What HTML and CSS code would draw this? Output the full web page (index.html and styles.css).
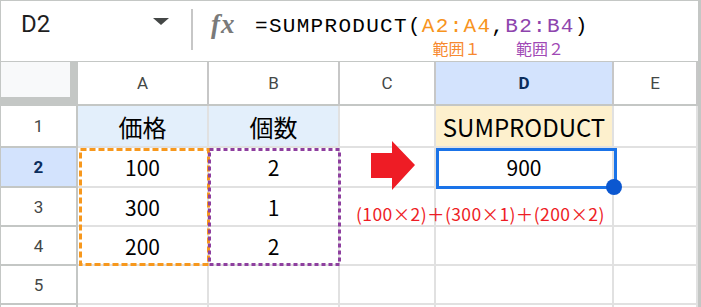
FILE: index.html
```html
<!DOCTYPE html>
<html lang="ja">
<head>
    <meta charset="UTF-8">
    <title>SUMPRODUCT</title>
    <link rel="stylesheet" href="styles.css">
</head>
<body>
    <div class="sheet">
        <div class="formula-bar">
            <div class="name-box">
                <span>D2</span>
                <span class="caret"></span>
            </div>
            <div class="divider"></div>
            <span class="fx">fx</span>
            <div class="formula">=SUMPRODUCT(<span class="range r1">A2:A4<span class="label">範囲１</span></span>,<span class="range r2">B2:B4<span class="label">範囲２</span></span>)</div>
        </div>

        <div class="grid">
            <div class="corner"></div>
            <div class="hd">A</div>
            <div class="hd">B</div>
            <div class="hd">C</div>
            <div class="hd active">D</div>
            <div class="hd">E</div>

            <div class="rh">1</div>
            <div class="c title blue">価格</div>
            <div class="c title blue">個数</div>
            <div class="c"></div>
            <div class="c title yellow">SUMPRODUCT</div>
            <div class="c"></div>

            <div class="rh active">2</div>
            <div class="c">100</div>
            <div class="c">2</div>
            <div class="c"></div>
            <div class="c">900</div>
            <div class="c"></div>

            <div class="rh">3</div>
            <div class="c">300</div>
            <div class="c">1</div>
            <div class="c"></div>
            <div class="c"></div>
            <div class="c"></div>

            <div class="rh">4</div>
            <div class="c">200</div>
            <div class="c">2</div>
            <div class="c"></div>
            <div class="c"></div>
            <div class="c"></div>

            <div class="rh">5</div>
            <div class="c"></div>
            <div class="c"></div>
            <div class="c"></div>
            <div class="c"></div>
            <div class="c"></div>

            <div class="rh"></div>
            <div class="c"></div>
            <div class="c"></div>
            <div class="c"></div>
            <div class="c"></div>
            <div class="c"></div>
        </div>

        <!-- overlays -->
        <svg class="range-box orange" width="131" height="118">
            <rect x="1.5" y="1.5" width="128" height="115" fill="none" stroke="#f7981d" stroke-width="3" stroke-dasharray="6 3"/>
        </svg>
        <svg class="range-box purple" width="133" height="118">
            <rect x="1.5" y="1.5" width="130" height="115" fill="none" stroke="#8e3f9f" stroke-width="3" stroke-dasharray="4 3"/>
        </svg>
        <div class="selection"></div>
        <div class="handle"></div>
        <svg class="arrow" width="44" height="50">
            <polygon points="0,12 21,12 21,0 44,24 21,49 21,37 0,37" fill="#ee1c25"/>
        </svg>
        <div class="note">(100×2)＋(300×1)＋(200×2)</div>
    </div>
</body>
</html>
```

FILE: styles.css
```css
body {
    margin: 0;
    background: #ffffff;
    font-family: Roboto, Arial, sans-serif;
}
.sheet {
    position: relative;
    width: 701px;
    height: 307px;
    overflow: hidden;
    box-sizing: border-box;
    border-top: 1px solid #c4c7c5;
    border-left: 1px solid #c4c7c5;
    border-right: 3px solid #c4c7c5;
    background: #ffffff;
}
.formula-bar {
    display: flex;
    align-items: flex-start;
    height: 61px;
    box-sizing: border-box;
    border-bottom: 1px solid #c4c7c5;
}
.name-box {
    width: 190px;
    box-sizing: border-box;
    display: flex;
    justify-content: space-between;
    align-items: center;
    padding: 0 22px 0 20px;
    margin-top: 9px;
    height: 28px;
    font-size: 24px;
    line-height: 28px;
    color: #1f1f1f;
}
.caret {
    width: 0;
    height: 0;
    border-left: 8px solid transparent;
    border-right: 8px solid transparent;
    border-top: 7px solid #444746;
    margin-top: -6px;
}
.divider {
    width: 2px;
    height: 41px;
    margin-top: 8px;
    background: #c7c7c7;
}
.fx {
    margin: 9px 0 0 18px;
    width: 28px;
    font-family: "Liberation Serif", serif;
    font-style: italic;
    font-weight: bold;
    font-size: 27px;
    line-height: 28px;
    color: #7a7a7a;
    letter-spacing: 1px;
}
.formula {
    margin: 14px 0 0 16px;
    font-family: "Liberation Mono", monospace;
    font-size: 21px;
    line-height: 24px;
    letter-spacing: 1.3px;
    color: #000000;
    white-space: nowrap;
}
.range {
    position: relative;
}
.range .label {
    position: absolute;
    top: 25px;
    left: 50%;
    transform: translateX(-50%);
    font-family: "Noto Sans CJK JP", sans-serif;
    font-size: 16px;
    line-height: 16px;
    letter-spacing: 0;
}
.r1 {
    color: #f7941d;
}
.r2 {
    color: #8e44ad;
}
.r1 .label {
    color: #f7892f;
}
.r2 .label {
    color: #a049b5;
}

.grid {
    display: grid;
    grid-template-columns: 77px 131px 131px 96px 178px 84px;
    grid-template-rows: 44px 42px 40px 39px 39px 39px 39px;
}
.grid > div {
    box-sizing: border-box;
    display: flex;
    align-items: center;
    justify-content: center;
}
.corner {
    background: #f8f9fa;
    border-right: 8px solid #c4c7c5;
    border-bottom: 9px solid #c4c7c5;
}
.hd {
    border-right: 2px solid #c7c7c7;
    border-bottom: 2px solid #c4c7c5;
    font-size: 17px;
    color: #444746;
}
.hd.active,
.rh.active {
    background: #d3e3fd;
    color: #0b2d5c;
    font-weight: bold;
}
.rh {
    border-right: 2px solid #c4c7c5;
    border-bottom: 2px solid #c4c7c5;
    font-size: 17px;
    color: #444746;
}
.c {
    border-right: 2px solid #e1e1e1;
    border-bottom: 2px solid #e1e1e1;
    font-family: "Noto Sans CJK JP", sans-serif;
    font-size: 21px;
    color: #000000;
}
.c.title {
    font-size: 24px;
}
.blue {
    background: #e3effb;
}
.yellow {
    background: #fdf0cd;
}

.range-box {
    position: absolute;
    top: 147px;
}
.orange {
    left: 78px;
}
.purple {
    left: 207px;
}
.selection {
    position: absolute;
    left: 435px;
    top: 147px;
    width: 181px;
    height: 41px;
    box-sizing: border-box;
    border: 3px solid #1a73e8;
}
.handle {
    position: absolute;
    left: 605px;
    top: 178px;
    width: 16px;
    height: 16px;
    border-radius: 50%;
    background: #0b57d0;
}
.arrow {
    position: absolute;
    left: 370px;
    top: 140px;
}
.note {
    position: absolute;
    left: 355px;
    top: 203px;
    font-family: "Noto Sans CJK JP", sans-serif;
    font-size: 17.5px;
    line-height: 20px;
    letter-spacing: 0.4px;
    color: #ee1c25;
    white-space: nowrap;
}
```
